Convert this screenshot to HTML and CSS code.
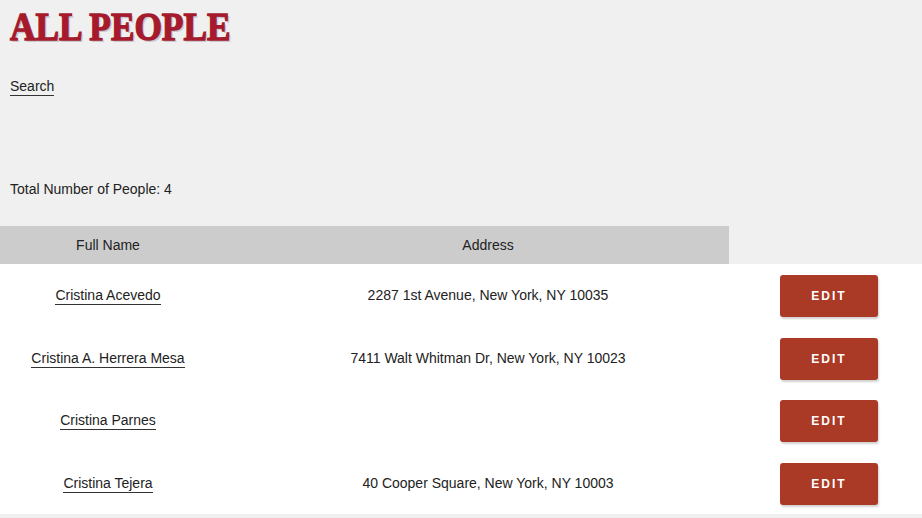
FILE: index.html
```html
<html>
  <head>
    <link rel="stylesheet" href="styles.css">
  </head>
  <body>
    <div id="page">
      <h1 class="title">ALL PEOPLE</h1>
      <div class="search"><a href="#" class="link">Search</a></div>
      <div class="total">Total Number of People: 4</div>

      <div class="people">
        <div class="head">
          <div class="cell">Full Name</div>
          <div class="cell">Address</div>
        </div>
        <div class="body">
          <div class="row">
            <div class="cell"><a href="#" class="link">Cristina Acevedo</a></div>
            <div class="cell">2287 1st Avenue, New York, NY 10035</div>
            <div class="cell"><button class="edit">EDIT</button></div>
          </div>
          <div class="row">
            <div class="cell"><a href="#" class="link">Cristina A. Herrera Mesa</a></div>
            <div class="cell">7411 Walt Whitman Dr, New York, NY 10023</div>
            <div class="cell"><button class="edit">EDIT</button></div>
          </div>
          <div class="row">
            <div class="cell"><a href="#" class="link">Cristina Parnes</a></div>
            <div class="cell"></div>
            <div class="cell"><button class="edit">EDIT</button></div>
          </div>
          <div class="row">
            <div class="cell"><a href="#" class="link">Cristina Tejera</a></div>
            <div class="cell">40 Cooper Square, New York, NY 10003</div>
            <div class="cell"><button class="edit">EDIT</button></div>
          </div>
        </div>
      </div>
    </div>
  </body>
</html>
```

FILE: styles.css
```css
* {
    font-family: "Liberation Sans", Arial, sans-serif;
    font-size: 14px;
    color: #222;
}
body{
    margin: 0;
    background: #f0f0f0;
}
.title{
    margin: 0;
    padding: 4px 10px 0;
    line-height: 44px;
}
.title{
    font-family: "Liberation Serif", serif;
    font-size: 41px;
    font-weight: bold;
    color: #a51a2c;
    -webkit-text-stroke: 1.4px #a51a2c;
    text-shadow: 2px 2px 0 #c9c9cf;
    transform: scaleX(0.86);
    transform-origin: 10px 0;
}
.search{
    padding: 29px 10px 0;
    line-height: 18px;
}
.link{
    text-decoration: none;
    border-bottom: 1px solid #333;
    padding-bottom: 1px;
    color: #222;
}
.total{
    padding: 85px 10px 0;
    line-height: 18px;
}
.people{
    margin-top: 28px;
}
.head{
    display: grid;
    grid-template-columns: 216px 544px;
    width: 729px;
    height: 38px;
    align-items: center;
    background: #cccccc;
}
.body{
    background: #fff;
}
.row{
    display: grid;
    grid-template-columns: 216px 544px 138px;
    height: 62.5px;
    align-items: center;
}
.cell{
    text-align: center;
    white-space: nowrap;
}
.edit{
    width: 98px;
    height: 42px;
    margin-top: 2px;
    border: none;
    border-radius: 3px;
    background: #aa3926;
    color: #fff;
    font-size: 12px;
    font-weight: bold;
    letter-spacing: 2px;
    box-shadow: 1px 2px 2px rgba(0,0,0,0.18);
}
```
